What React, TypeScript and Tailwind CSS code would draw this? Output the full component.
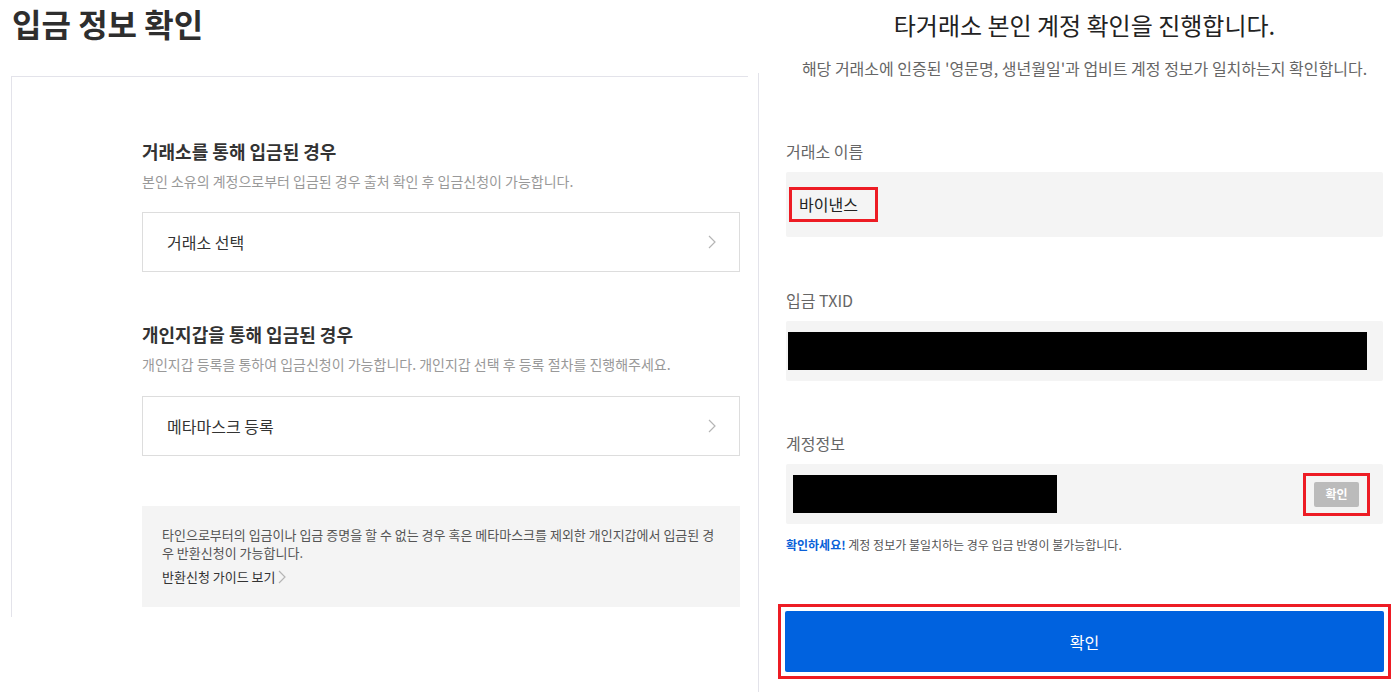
/* ── Small pieces ───────────────────────────────────────────── */

function Chevron({ className = "" }: { className?: string }) {
  return (
    <svg width="8" height="14" viewBox="0 0 8 14" fill="none" className={className}>
      <polyline points="1,1 7,7 1,13" stroke="#b5b5b5" strokeWidth="1.2" />
    </svg>
  );
}

function SelectRow({ label }: { label: string }) {
  return (
    <button className="flex h-[60px] w-full items-center justify-between border border-[#dddddd] bg-white pl-[24px] pr-[23px] text-left text-[16px] text-[#333333]">
      <span>{label}</span>
      <Chevron />
    </button>
  );
}

function Field({ label, children, top }: { label: string; children: React.ReactNode; top: string }) {
  return (
    <div className={top}>
      <div className="text-[16px] leading-[22px] text-[#666666]">{label}</div>
      {children}
    </div>
  );
}

/* ── Page ───────────────────────────────────────────────────── */

export default function App() {
  return (
    <div className="flex h-[692px] w-[1400px] overflow-hidden bg-white font-['Noto_Sans_CJK_KR','Noto_Sans',sans-serif]">
      {/* left */}
      <div className="w-[758px] shrink-0">
        <h1 className="pl-[12px] pt-[3px] text-[32px] font-bold leading-[40px] text-[#2e2e2e]">
          입금 정보 확인
        </h1>
        <div className="ml-[11px] mt-[33px] w-[737px] border-l border-t border-[#e3e3ea] pb-[10px] pl-[130px] pr-[8px] pt-[62px]">
          <h2 className="text-[18px] font-bold leading-[24px] text-[#333333]">거래소를 통해 입금된 경우</h2>
          <p className="mt-[8px] text-[14px] leading-[20px] text-[#999999]">
            본인 소유의 계정으로부터 입금된 경우 출처 확인 후 입금신청이 가능합니다.
          </p>
          <div className="mt-[21px]">
            <SelectRow label="거래소 선택" />
          </div>

          <h2 className="mt-[50px] text-[18px] font-bold leading-[24px] text-[#333333]">개인지갑을 통해 입금된 경우</h2>
          <p className="mt-[8px] text-[14px] leading-[20px] text-[#999999]">
            개인지갑 등록을 통하여 입금신청이 가능합니다. 개인지갑 선택 후 등록 절차를 진행해주세요.
          </p>
          <div className="mt-[22px]">
            <SelectRow label="메타마스크 등록" />
          </div>

          <div className="mt-[50px] bg-[#f4f4f4] pb-[20px] pl-[20px] pr-[20px] pt-[20px]">
            <p className="break-all text-[13px] leading-[18px] text-[#555555]">
              타인으로부터의 입금이나 입금 증명을 할 수 없는 경우 혹은 메타마스크를 제외한 개인지갑에서 입금된 경우 반환신청이 가능합니다.
            </p>
            <a className="mt-[5px] flex items-center gap-[3px] text-[13px] leading-[20px] text-[#333333]">
              반환신청 가이드 보기
              <Chevron className="h-[14px] w-[8px]" />
            </a>
          </div>
        </div>
      </div>

      {/* divider */}
      <div className="mt-[73px] w-px shrink-0 bg-[#e3e3ea]" />

      {/* right */}
      <div className="flex-1 pl-[27px] pr-[17px]">
        <h2 className="pt-[9px] text-center text-[24px] leading-[32px] text-[#222222]">
          타거래소 본인 계정 확인을 진행합니다.
        </h2>
        <p className="mt-[16px] text-center text-[16px] leading-[22px] text-[#666666]">
          해당 거래소에 인증된 '영문명, 생년월일'과 업비트 계정 정보가 일치하는지 확인합니다.
        </p>

        <Field label="거래소 이름" top="mt-[61px]">
          <div className="mt-[10px] flex h-[65px] items-center rounded-[2px] bg-[#f4f4f4] pl-[3px]">
            <span className="h-[35px] w-[89px] border-[3px] border-[#ed1c24] px-[7px] text-[16px] leading-[29px] text-[#222222]">바이낸스</span>
          </div>
        </Field>

        <Field label="입금 TXID" top="mt-[52px]">
          <div className="mt-[10px] flex h-[60px] items-center rounded-[2px] bg-[#f4f4f4] pl-[2px] pr-[16px]">
            <div className="h-[38px] flex-1 bg-black" />
          </div>
        </Field>

        <Field label="계정정보" top="mt-[51px]">
          <div className="mt-[10px] flex h-[60px] items-center justify-between rounded-[2px] bg-[#f4f4f4] pl-[7px] pr-[13px]">
            <div className="h-[38px] w-[264px] bg-black" />
            <div className="border-[3px] border-[#ed1c24] px-[8px] py-[6px]">
              <button className="flex h-[25px] w-[45px] items-center justify-center rounded-[2px] bg-[#bbbbbb] text-[12px] font-bold text-white">
                확인
              </button>
            </div>
          </div>
        </Field>

        <p className="mt-[13px] text-[12px] leading-[16px] text-[#555555]">
          <span className="font-bold text-[#0a5fd8]">확인하세요!</span> 계정 정보가 불일치하는 경우 입금 반영이 불가능합니다.
        </p>

        <div className="-mx-[8px] mt-[51px] border-[3px] border-[#ed1c24] p-[4px]">
          <button className="flex h-[61px] w-full items-center justify-center rounded-[2px] bg-[#0062df] text-[16px] text-white">
            확인
          </button>
        </div>
      </div>
    </div>
  );
}
